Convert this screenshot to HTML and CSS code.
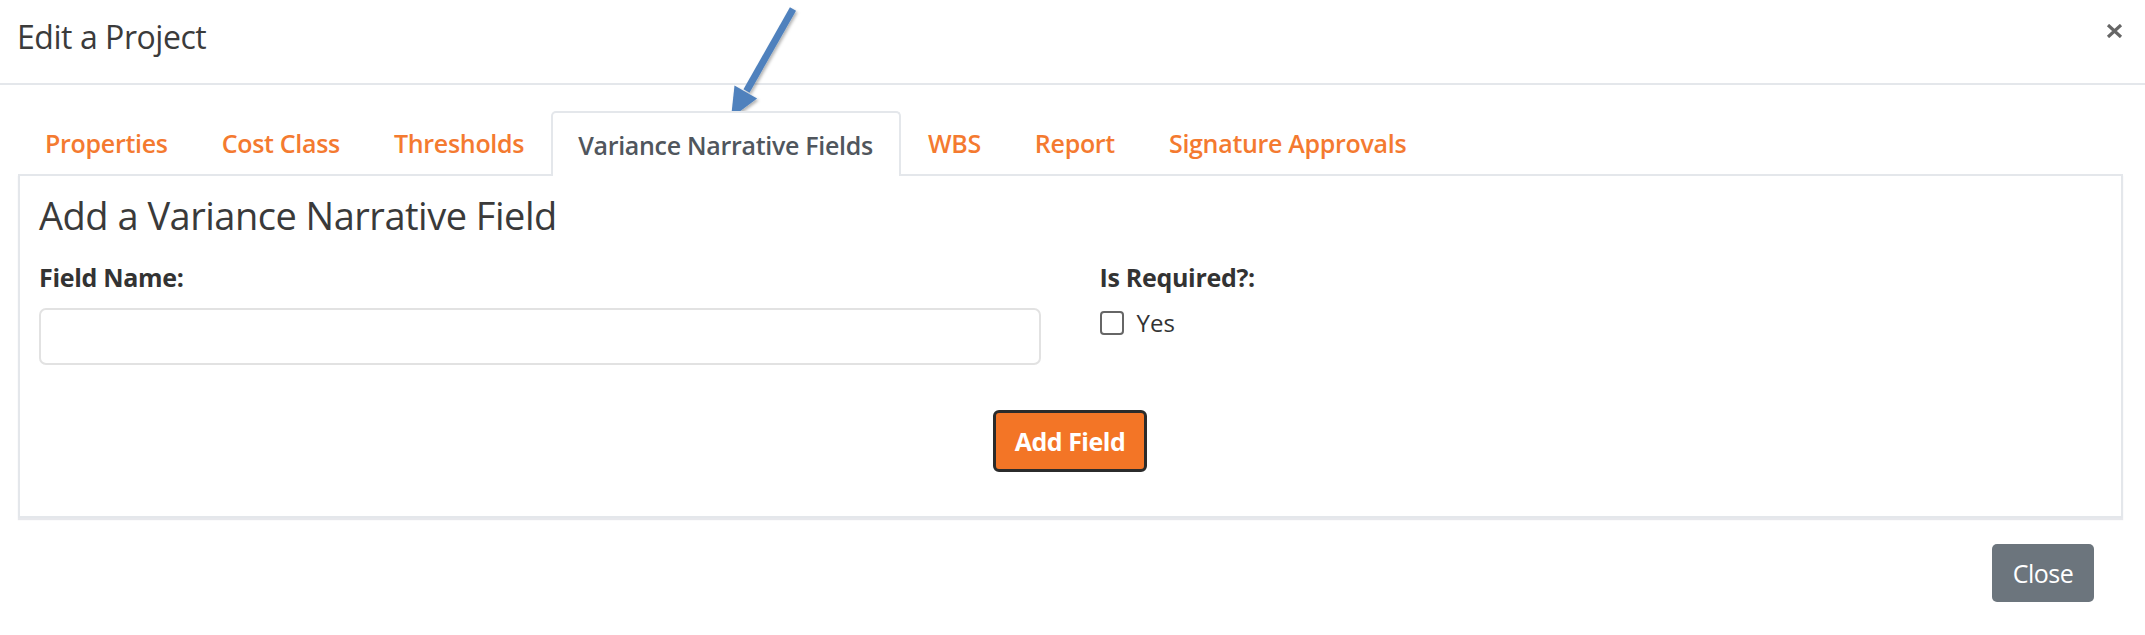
FILE: index.html
```html
<!DOCTYPE html>
<html lang="en">
<head>
<meta charset="utf-8">
<title>Edit a Project</title>
<link rel="stylesheet" href="styles.css">
</head>
<body>
<div class="modal">
  <header class="modal-header">
    <h5 class="modal-title">Edit a Project</h5>
    <button class="close" aria-label="Close">
      <svg width="17" height="14" viewBox="0 0 17 14"><path d="M2 1 L15 13 M15 1 L2 13" stroke="#666" stroke-width="3.2" stroke-linecap="butt"/></svg>
    </button>
  </header>
  <div class="modal-body">
    <ul class="tabs">
      <li class="tab">Properties</li>
      <li class="tab">Cost Class</li>
      <li class="tab">Thresholds</li>
      <li class="tab active">Variance Narrative Fields</li>
      <li class="tab">WBS</li>
      <li class="tab">Report</li>
      <li class="tab">Signature Approvals</li>
    </ul>
    <section class="panel">
      <h3 class="panel-title">Add a Variance Narrative Field</h3>
      <div class="form-row">
        <div class="form-group">
          <label class="label" for="fieldName">Field Name:</label>
          <input class="input" id="fieldName" type="text">
        </div>
        <div class="form-group">
          <span class="label">Is Required?:</span>
          <label class="check"><span class="box"></span><span>Yes</span></label>
        </div>
      </div>
      <div class="actions">
        <button class="btn-add">Add Field</button>
      </div>
    </section>
  </div>
  <footer class="modal-footer">
    <button class="btn-close">Close</button>
  </footer>
  <svg class="arrow" width="90" height="120" viewBox="0 0 90 120">
    <defs>
      <filter id="sh" x="-30%" y="-30%" width="160%" height="160%">
        <feDropShadow dx="1.5" dy="2" stdDeviation="1.5" flood-color="#000" flood-opacity="0.3"/>
      </filter>
    </defs>
    <g filter="url(#sh)">
      <path d="M69 3 L22.5 85" stroke="#4f81bd" stroke-width="7" fill="none"/>
      <path d="M7 112 L10.5 79.6 L33.1 92.4 Z" fill="#4f81bd"/>
    </g>
  </svg>
</div>
</body>
</html>
```
FILE: styles.css
```css
* { box-sizing: border-box; }
html, body { margin: 0; padding: 0; background: #fff; }
body {
  font-family: "Open Sans", "Liberation Sans", sans-serif;
  color: #333;
  width: 2145px;
  height: 635px;
  overflow: hidden;
}
.modal { position: relative; }
.modal-header {
  height: 85px;
  border-bottom: 2px solid #e4e7eb;
  display: flex;
  align-items: flex-start;
  justify-content: space-between;
  padding: 15px 22px 0 17px;
}
.modal-title {
  margin: 0;
  font-size: 32px;
  font-weight: 400;
  color: #3b3b3b;
  letter-spacing: -0.45px;
}
.close {
  border: 0;
  background: none;
  padding: 0;
  margin-top: 9px;
  display: flex;
}
.modal-body { padding: 26px 22px 0 18px; }
.tabs {
  list-style: none;
  margin: 0;
  padding: 0;
  display: flex;
  height: 63px;
}
.tab {
  padding: 0 26px;
  border: 1px solid transparent;
  border-bottom: 0;
  font-size: 25px;
  font-weight: 600;
  color: #f47a30;
  display: flex;
  align-items: center;
  letter-spacing: -0.3px;
  white-space: nowrap;
}
.tab.active {
  color: #50565d;
  border: 2px solid #e4e7eb;
  border-bottom: 0;
  border-radius: 5px 5px 0 0;
  background: #fff;
  padding-left: 25px;
  padding-right: 26px;
  margin-bottom: -2px;
  position: relative;
  z-index: 1;
}
.panel {
  border: 2px solid #e4e7eb;
  box-shadow: 0 2px 1px rgba(120,130,150,0.18);
  padding: 16px 20px 44px 19px;
}
.panel-title {
  margin: 0 0 22px;
  font-size: 38px;
  font-weight: 400;
  color: #3a3a3a;
  line-height: 46px;
  letter-spacing: -0.5px;
}
.form-row {
  display: grid;
  grid-template-columns: 1fr 1fr;
  column-gap: 59px;
}
.form-group { display: flex; flex-direction: column; }
.label {
  font-size: 25px;
  font-weight: 700;
  color: #333;
  line-height: 34px;
  margin-bottom: 14px;
  letter-spacing: -0.3px;
}
.input {
  height: 57px;
  border: 2px solid #e2e2e2;
  border-radius: 7px;
  background: #fff;
  font: inherit;
}
.check {
  display: flex;
  align-items: center;
  gap: 13px;
  font-size: 24px;
  line-height: 34px;
  color: #333;
  margin-top: -2px;
}
.box {
  width: 24px;
  height: 24px;
  border: 2px solid #666;
  border-radius: 4px;
  background: #fff;
}
.actions {
  display: flex;
  justify-content: center;
  margin-top: 45px;
}
.btn-add {
  width: 154px;
  height: 62px;
  background: #f37526;
  color: #fff;
  border: 3px solid #2b2b2b;
  border-radius: 6px;
  font-family: "Open Sans", "Liberation Sans", sans-serif;
  font-size: 25px;
  font-weight: 700;
  letter-spacing: -0.5px;
  padding: 0;
}
.modal-footer {
  display: flex;
  justify-content: flex-end;
  padding: 26px 51px 0 0;
}
.btn-close {
  width: 102px;
  height: 58px;
  background: #6c757d;
  color: #fff;
  border: 0;
  border-radius: 5px;
  font-family: "Open Sans", "Liberation Sans", sans-serif;
  font-size: 25px;
  font-weight: 400;
  padding: 0;
  letter-spacing: -0.5px;
}
.arrow {
  position: absolute;
  left: 724px;
  top: 6px;
}
```
